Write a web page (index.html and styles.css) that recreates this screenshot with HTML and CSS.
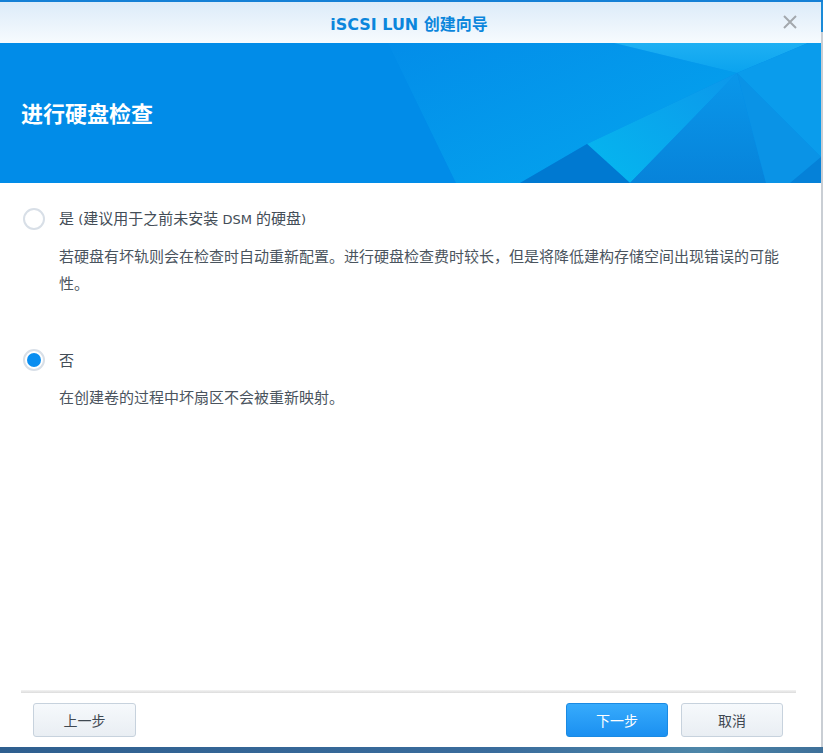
FILE: index.html
```html
<!DOCTYPE html>
<html lang="zh-CN">
<head>
<meta charset="utf-8">
<title>iSCSI LUN 创建向导</title>
<link rel="stylesheet" href="styles.css">
</head>
<body>
<div class="desktop-top"></div>
<div class="stage">
  <div class="window">
    <div class="titlebar">
      <span class="title">iSCSI LUN 创建向导</span>
      <svg class="close" width="16" height="16" viewBox="0 0 16 16"><path d="M2 2 L14 14 M14 2 L2 14" stroke="#a3a8ad" stroke-width="2" fill="none"/></svg>
    </div>
    <div class="banner">
      <svg class="banner-art" width="821" height="140" viewBox="0 0 821 140" preserveAspectRatio="none">
        <defs>
          <linearGradient id="g1" x1="0" y1="0" x2="0" y2="1"><stop offset="0" stop-color="#1fb0f3"/><stop offset="1" stop-color="#0aa3ef"/></linearGradient>
          <linearGradient id="g2" x1="0" y1="1" x2="1" y2="0"><stop offset="0" stop-color="#05b8ef"/><stop offset="1" stop-color="#0c97eb"/></linearGradient>
          <linearGradient id="g3" x1="0" y1="0" x2="1" y2="1"><stop offset="0" stop-color="#038de9"/><stop offset="1" stop-color="#04a6ee"/></linearGradient>
          <linearGradient id="g4" x1="0" y1="0" x2="0" y2="1"><stop offset="0" stop-color="#0a97ea"/><stop offset="1" stop-color="#0783da"/></linearGradient>
        </defs>
        <polygon points="388,0 456,140 0,140 0,0" fill="#018ce8"/>
        <polygon points="388,0 614,0 737,30 587,101 520,140 456,140" fill="url(#g3)"/>
        <polygon points="614,0 808,0 737,30" fill="url(#g1)"/>
        <polygon points="808,0 821,0 821,114 737,30" fill="#0a9cec"/>
        <polygon points="737,30 587,101 630,140" fill="url(#g2)"/>
        <polygon points="587,101 630,140 520,140" fill="#0079d1"/>
        <polygon points="737,30 630,140 766,140" fill="url(#g4)"/>
        <polygon points="737,30 821,114 821,140 766,140" fill="#0a93e6"/>
        <polygon points="821,114 821,140 790,140" fill="#0581d8"/>
      </svg>
      <h1 class="banner-title">进行硬盘检查</h1>
    </div>
    <div class="main">
      <div class="option">
        <div class="option-row">
          <span class="radio"></span>
          <span class="option-label">是<span class="lt"> (</span>建议用于之前未安装<span class="lt"> DSM </span>的硬盘<span class="lt">)</span></span>
        </div>
        <p class="option-desc">若硬盘有坏轨则会在检查时自动重新配置。进行硬盘检查费时较长，但是将降低建构存储空间出现错误的可能性。</p>
      </div>
      <div class="option option-second">
        <div class="option-row">
          <span class="radio radio-checked"></span>
          <span class="option-label">否</span>
        </div>
        <p class="option-desc">在创建卷的过程中坏扇区不会被重新映射。</p>
      </div>
    </div>
    <div class="footer">
      <div class="separator"></div>
      <div class="buttons">
        <button class="btn btn-back">上一步</button>
        <div class="spacer"></div>
        <button class="btn btn-primary">下一步</button>
        <button class="btn">取消</button>
      </div>
    </div>
  </div>
  <div class="edge"></div>
</div>
<div class="desktop-bottom"></div>
</body>
</html>
```

FILE: styles.css
```css
html, body {
  margin: 0;
  padding: 0;
}
body {
  width: 823px;
  height: 753px;
  overflow: hidden;
  background: #3d6e9c;
  font-family: "Noto Sans CJK SC", sans-serif;
  display: flex;
  flex-direction: column;
}
.desktop-top {
  height: 2px;
  background: #1580d6;
}
.stage {
  display: flex;
  height: 745px;
}
.window {
  width: 821px;
  height: 745px;
  background: #ffffff;
  display: flex;
  flex-direction: column;
}
.edge {
  width: 2px;
  background: linear-gradient(#1a8ad8 0, #1a8ad8 30px, #c9ced4 30px, #c9ced4 100%);
}
.desktop-bottom {
  height: 6px;
  background: linear-gradient(90deg, #2f5f8f 0, #3a6c9c 60%, #4d86a8 85%, #3e7099 100%);
}
.titlebar {
  height: 41px;
  flex: none;
  background: linear-gradient(#dcebf9, #f7fbfe);
  display: flex;
  align-items: center;
  justify-content: center;
  position: relative;
}
.title {
  font-family: "DejaVu Sans", "Noto Sans CJK SC", sans-serif;
  font-weight: bold;
  font-size: 16px;
  color: #0b86dc;
  margin-right: 3px;
}
.close {
  position: absolute;
  right: 23px;
  top: 12px;
}
.banner {
  height: 140px;
  flex: none;
  background: #018ce8;
  position: relative;
  display: flex;
  align-items: center;
  overflow: hidden;
}
.banner-art {
  position: absolute;
  left: 0;
  top: 0;
}
.banner-title {
  position: relative;
  margin: 0 0 2px 21px;
  font-family: "Noto Sans CJK SC", sans-serif;
  font-weight: bold;
  font-size: 22px;
  line-height: 30px;
  color: #ffffff;
}
.main {
  flex: 1;
  padding: 25px 34px 0 23px;
}
.option-second {
  margin-top: 53px;
}
.option-row {
  display: flex;
  align-items: center;
  height: 22px;
}
.radio {
  width: 18px;
  height: 18px;
  border: 2px solid #d8dfe7;
  border-radius: 50%;
  background: #fff;
  box-sizing: content-box;
  flex: none;
  position: relative;
}
.radio-checked::after {
  content: "";
  position: absolute;
  left: 2px;
  top: 2px;
  width: 14px;
  height: 14px;
  border-radius: 50%;
  background: #0a8ef0;
}
.option-label {
  margin-left: 14px;
  font-size: 15px;
  line-height: 22px;
  color: #434d57;
  white-space: pre;
}
.lt {
  font-family: "DejaVu Sans", sans-serif;
  font-size: 13px;
}
.option-desc {
  margin: 12px 0 0 36px;
  width: 728px;
  font-size: 15px;
  line-height: 27px;
  color: #4a545e;
}
.footer {
  flex: none;
}
.separator {
  margin: 0 25px 0 21px;
  height: 3px;
  background: linear-gradient(#f3f3f3, #dcdcdc);
}
.buttons {
  display: flex;
  padding: 10px 38px 10px 33px;
  gap: 13px;
}
.spacer {
  flex: 1;
}
.btn {
  width: 102px;
  height: 34px;
  border: 1px solid #c7d2dd;
  border-radius: 3px;
  background: linear-gradient(#f6f9fc, #e9eef3);
  font-family: "Noto Sans CJK SC", sans-serif;
  font-size: 14px;
  color: #3f4851;
  padding: 0;
}
.btn-back {
  width: 103px;
}
.btn-primary {
  border-color: #1a8ae3;
  background: linear-gradient(#37abfc, #1b90f1);
  color: #ffffff;
}
```
